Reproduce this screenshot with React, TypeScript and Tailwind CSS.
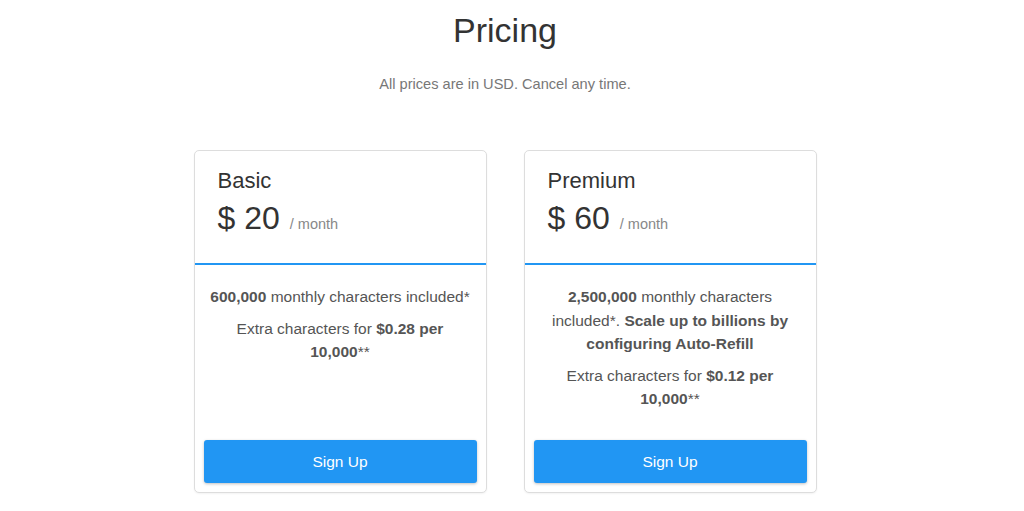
import React from "react";

type Plan = {
  name: string;
  price: string;
  body: React.ReactNode[];
};

const plans: Plan[] = [
  {
    name: "Basic",
    price: "20",
    body: [
      <>
        <b className="font-bold">600,000</b> monthly characters included*
      </>,
      <>
        Extra characters for <b className="font-bold">$0.28 per 10,000</b>**
      </>,
    ],
  },
  {
    name: "Premium",
    price: "60",
    body: [
      <>
        <b className="font-bold">2,500,000</b> monthly characters included*.{" "}
        <b className="font-bold">Scale up to billions by configuring Auto-Refill</b>
      </>,
      <>
        Extra characters for <b className="font-bold">$0.12 per 10,000</b>**
      </>,
    ],
  },
];

function Card({ plan }: { plan: Plan }) {
  return (
    <div className="w-[293px] flex flex-col rounded-[5px] border border-[#dddddd] bg-white shadow-[0_1px_2px_rgba(0,0,0,0.05)]">
      <div className="pl-[23px] pt-[17px] pb-[26px] border-b-2 border-[#2196f3]">
        <div className="text-[22px] leading-[26px] text-[#333333]">{plan.name}</div>
        <div className="mt-[5px] flex items-baseline">
          <span className="text-[32px] leading-[38px] text-[#333333]">$ {plan.price}</span>
          <span className="ml-[10px] text-[14.5px] text-[#888888]">/ month</span>
        </div>
      </div>
      <div className="flex-1 px-3 pt-[20px] pb-[30px] text-center text-[15.5px] leading-[23.25px] text-[#555555]">
        {plan.body.map((p, i) => (
          <p key={i} className={i > 0 ? "mt-[8.5px]" : ""}>
            {p}
          </p>
        ))}
      </div>
      <div className="px-[9px] pb-[9px]">
        <button className="w-full h-[43px] rounded-[3px] bg-[#2196f3] text-white text-[15.5px] shadow-[0_1px_3px_rgba(0,0,0,0.25)]">
          Sign Up
        </button>
      </div>
    </div>
  );
}

export default function App() {
  return (
    <div className="w-full min-h-[511px] bg-white font-['Liberation_Sans',Arial,sans-serif]">
      <div className="w-[1010px] flex flex-col items-center pt-[12px]">
        <h1 className="text-[34px] leading-[37.4px] text-[#333333] font-normal">Pricing</h1>
        <p className="mt-[25px] text-[14.6px] leading-[20px] text-[#777777]">
          All prices are in USD. Cancel any time.
        </p>
        <div className="mt-[56px] flex gap-[37px] items-stretch">
          {plans.map((p) => (
            <Card key={p.name} plan={p} />
          ))}
        </div>
      </div>
    </div>
  );
}
